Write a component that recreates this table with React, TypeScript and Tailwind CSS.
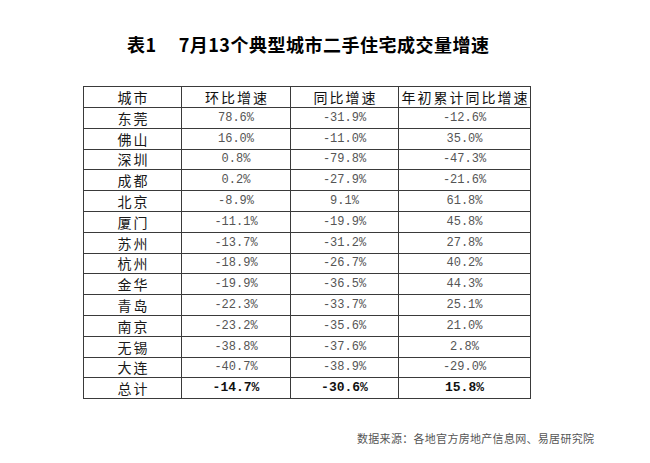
const rows = [
  ["东莞", "78.6%", "-31.9%", "-12.6%"],
  ["佛山", "16.0%", "-11.0%", "35.0%"],
  ["深圳", "0.8%", "-79.8%", "-47.3%"],
  ["成都", "0.2%", "-27.9%", "-21.6%"],
  ["北京", "-8.9%", "9.1%", "61.8%"],
  ["厦门", "-11.1%", "-19.9%", "45.8%"],
  ["苏州", "-13.7%", "-31.2%", "27.8%"],
  ["杭州", "-18.9%", "-26.7%", "40.2%"],
  ["金华", "-19.9%", "-36.5%", "44.3%"],
  ["青岛", "-22.3%", "-33.7%", "25.1%"],
  ["南京", "-23.2%", "-35.6%", "21.0%"],
  ["无锡", "-38.8%", "-37.6%", "2.8%"],
  ["大连", "-40.7%", "-38.9%", "-29.0%"],
];

const cjk = "font-['Noto_Sans_CJK_SC',sans-serif]";
const num = "font-['Liberation_Mono','Noto_Sans_CJK_SC',monospace]";
const cell = "border border-[#3a3a3a] text-center align-middle p-0";

// chinese labels get a little gap between characters, like the source table
function Spaced({ text }: { text: string }) {
  return (
    <div className="flex justify-center gap-[2px]">
      {text.split("").map((c, i) => (
        <span key={i}>{c}</span>
      ))}
    </div>
  );
}

export default function App() {
  return (
    <div className="w-[650px] h-[463px] bg-white flex flex-col relative">
      <h1 className={`${cjk} self-start ml-[127px] mt-[33px] text-[18px] leading-[22px] font-bold text-black tracking-[0.5px] flex`}>
        <span>表1</span>
        <span className="ml-[22px]">7月13个典型城市二手住宅成交量增速</span>
      </h1>

      <table className="self-start ml-[83px] mt-[31px] border-[1.5px] border-[#3a3a3a] w-[447px] table-fixed">
        <thead>
          <tr className="h-[21px]">
            <th className={`${cjk} ${cell} w-[98px] font-normal text-[14px] leading-[18px] text-[#111]`}>
              <Spaced text="城市" />
            </th>
            <th className={`${cjk} ${cell} w-[109px] font-normal text-[14px] leading-[18px] text-[#111]`}>
              <Spaced text="环比增速" />
            </th>
            <th className={`${cjk} ${cell} w-[108px] font-normal text-[14px] leading-[18px] text-[#111]`}>
              <Spaced text="同比增速" />
            </th>
            <th className={`${cjk} ${cell} w-[132px] font-normal text-[14px] leading-[18px] text-[#111]`}>
              <Spaced text="年初累计同比增速" />
            </th>
          </tr>
        </thead>
        <tbody>
          {rows.map((r) => (
            <tr key={r[0]} className="h-[20.8px]">
              <td className={`${cjk} ${cell} text-[14px] leading-[18px] text-[#1a1a1a]`}>
                <Spaced text={r[0]} />
              </td>
              <td className={`${num} ${cell} text-[12px] leading-[18px] text-[#555]`}>{r[1]}</td>
              <td className={`${num} ${cell} text-[12px] leading-[18px] text-[#555]`}>{r[2]}</td>
              <td className={`${num} ${cell} text-[12px] leading-[18px] text-[#555]`}>{r[3]}</td>
            </tr>
          ))}
          <tr className="h-[20.8px]">
            <td className={`${cjk} ${cell} text-[14px] leading-[18px] text-[#1a1a1a]`}>
              <Spaced text="总计" />
            </td>
            <td className={`${num} ${cell} text-[13px] leading-[18px] font-bold text-[#111]`}>-14.7%</td>
            <td className={`${num} ${cell} text-[13px] leading-[18px] font-bold text-[#111]`}>-30.6%</td>
            <td className={`${num} ${cell} text-[13px] leading-[18px] font-bold text-[#111]`}>15.8%</td>
          </tr>
        </tbody>
      </table>

      <p className={`${cjk} self-start ml-[357px] mt-[32px] text-[11px] leading-[14px] tracking-[0.3px] text-[#555]`}>
        数据来源：各地官方房地产信息网、易居研究院
      </p>
    </div>
  );
}
